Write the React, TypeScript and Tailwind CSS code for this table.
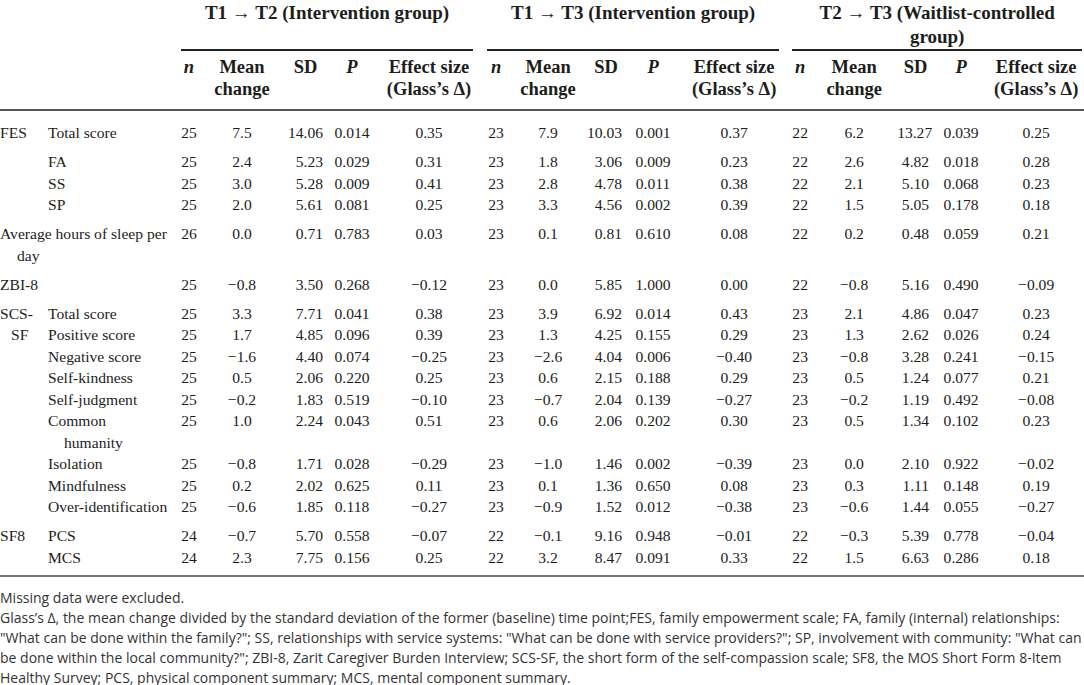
import React from "react"

type Row = {
    cat?: string
    catIndent?: boolean
    label: React.ReactNode
    span?: boolean
    v: string[]
    gap?: boolean
}

const rows: Row[] = [
    { cat: "FES", label: "Total score", v: ["25", "7.5", "14.06", "0.014", "0.35", "23", "7.9", "10.03", "0.001", "0.37", "22", "6.2", "13.27", "0.039", "0.25"] },
    { label: "FA", gap: true, v: ["25", "2.4", "5.23", "0.029", "0.31", "23", "1.8", "3.06", "0.009", "0.23", "22", "2.6", "4.82", "0.018", "0.28"] },
    { label: "SS", v: ["25", "3.0", "5.28", "0.009", "0.41", "23", "2.8", "4.78", "0.011", "0.38", "22", "2.1", "5.10", "0.068", "0.23"] },
    { label: "SP", v: ["25", "2.0", "5.61", "0.081", "0.25", "23", "3.3", "4.56", "0.002", "0.39", "22", "1.5", "5.05", "0.178", "0.18"] },
    {
        span: true,
        gap: true,
        label: (
            <>
                <span className="block">Average hours of sleep per</span>
                <span className="block pl-[17px]">day</span>
            </>
        ),
        v: ["26", "0.0", "0.71", "0.783", "0.03", "23", "0.1", "0.81", "0.610", "0.08", "22", "0.2", "0.48", "0.059", "0.21"],
    },
    { span: true, gap: true, label: "ZBI-8", v: ["25", "−0.8", "3.50", "0.268", "−0.12", "23", "0.0", "5.85", "1.000", "0.00", "22", "−0.8", "5.16", "0.490", "−0.09"] },
    { cat: "SCS-", gap: true, label: "Total score", v: ["25", "3.3", "7.71", "0.041", "0.38", "23", "3.9", "6.92", "0.014", "0.43", "23", "2.1", "4.86", "0.047", "0.23"] },
    { cat: "SF", catIndent: true, label: "Positive score", v: ["25", "1.7", "4.85", "0.096", "0.39", "23", "1.3", "4.25", "0.155", "0.29", "23", "1.3", "2.62", "0.026", "0.24"] },
    { label: "Negative score", v: ["25", "−1.6", "4.40", "0.074", "−0.25", "23", "−2.6", "4.04", "0.006", "−0.40", "23", "−0.8", "3.28", "0.241", "−0.15"] },
    { label: "Self-kindness", v: ["25", "0.5", "2.06", "0.220", "0.25", "23", "0.6", "2.15", "0.188", "0.29", "23", "0.5", "1.24", "0.077", "0.21"] },
    { label: "Self-judgment", v: ["25", "−0.2", "1.83", "0.519", "−0.10", "23", "−0.7", "2.04", "0.139", "−0.27", "23", "−0.2", "1.19", "0.492", "−0.08"] },
    {
        label: (
            <>
                <span className="block">Common</span>
                <span className="block pl-[16px]">humanity</span>
            </>
        ),
        v: ["25", "1.0", "2.24", "0.043", "0.51", "23", "0.6", "2.06", "0.202", "0.30", "23", "0.5", "1.34", "0.102", "0.23"],
    },
    { label: "Isolation", v: ["25", "−0.8", "1.71", "0.028", "−0.29", "23", "−1.0", "1.46", "0.002", "−0.39", "23", "0.0", "2.10", "0.922", "−0.02"] },
    { label: "Mindfulness", v: ["25", "0.2", "2.02", "0.625", "0.11", "23", "0.1", "1.36", "0.650", "0.08", "23", "0.3", "1.11", "0.148", "0.19"] },
    { label: "Over-identification", v: ["25", "−0.6", "1.85", "0.118", "−0.27", "23", "−0.9", "1.52", "0.012", "−0.38", "23", "−0.6", "1.44", "0.055", "−0.27"] },
    { cat: "SF8", gap: true, label: "PCS", v: ["24", "−0.7", "5.70", "0.558", "−0.07", "22", "−0.1", "9.16", "0.948", "−0.01", "22", "−0.3", "5.39", "0.778", "−0.04"] },
    { label: "MCS", v: ["24", "2.3", "7.75", "0.156", "0.25", "22", "3.2", "8.47", "0.091", "0.33", "22", "1.5", "6.63", "0.286", "0.18"] },
]

// alignment of the 15 value columns
const align = [
    "text-center", "text-center", "text-right pr-[4px]", "text-center", "text-center",
    "text-center", "text-center", "text-right pr-[5px]", "text-center", "text-center",
    "text-center", "text-center", "text-right pr-[5px]", "text-center", "text-center",
]

const widths = [46, 132, 22, 84, 43, 50, 104, 30, 74, 42, 52, 110, 22, 86, 37, 54, 96]

function SubHead() {
    const cells: React.ReactNode[] = []
    for (let g = 0; g < 3; g++) {
        cells.push(
            <th key={g + "n"} className="p-0 pt-[5px] pb-[9px] align-top text-center italic border-b-2 border-[#555]">n</th>,
            <th key={g + "m"} className="p-0 pt-[5px] pb-[9px] align-top text-center border-b-2 border-[#555] whitespace-nowrap">Mean<br />change</th>,
            <th key={g + "s"} className="p-0 pt-[5px] pb-[9px] align-top text-center border-b-2 border-[#555]">SD</th>,
            <th key={g + "p"} className="p-0 pt-[5px] pb-[9px] align-top text-center italic border-b-2 border-[#555]">P</th>,
            <th key={g + "e"} className="p-0 pt-[5px] pb-[9px] align-top text-center border-b-2 border-[#555] whitespace-nowrap">Effect size<br />(Glass’s Δ)</th>,
        )
    }
    return <tr className="leading-[22px]">{cells}</tr>
}

export default function App() {
    return (
        <div className="w-[1084px] h-[685px] overflow-hidden bg-white text-[#1d1d1b]">
            <table className="w-[1084px] table-fixed border-separate border-spacing-0 font-['Liberation_Serif',serif] text-[15.6px]">
                <colgroup>
                    {widths.map((w, i) => (
                        <col key={i} style={{ width: w }} />
                    ))}
                </colgroup>
                <thead className="font-bold text-[18.5px]">
                    <tr>
                        <th colSpan={2} rowSpan={2} className="p-0 border-b-2 border-[#555]"></th>
                        <th colSpan={5} className="p-0 align-top">
                            <div className="ml-[3px] mr-[8px] h-[51px] border-b-2 border-[#222] text-center text-[19px] leading-[24px] pt-[1px] whitespace-nowrap">
                                T1 → T2 (Intervention group)
                            </div>
                        </th>
                        <th colSpan={5} className="p-0 align-top">
                            <div className="ml-[6px] mr-[10px] h-[51px] border-b-2 border-[#222] text-center text-[19px] leading-[24px] pt-[1px] whitespace-nowrap">
                                T1 → T3 (Intervention group)
                            </div>
                        </th>
                        <th colSpan={5} className="p-0 align-top">
                            <div className="ml-[3px] mr-[2px] h-[51px] border-b-2 border-[#222] text-center text-[19px] leading-[24px] pt-[1px] whitespace-nowrap">
                                T2 → T3 (Waitlist-controlled
                                <br />
                                group)
                            </div>
                        </th>
                    </tr>
                    <SubHead />
                </thead>
                <tbody className="leading-[21.5px]">
                    {rows.map((r, i) => {
                        const first = i === 0
                        const last = i === rows.length - 1
                        const pad = first ? "pt-[11px]" : r.gap ? "pt-[7.5px]" : ""
                        const bottom = last ? "pb-[7px] border-b-2 border-[#777]" : ""
                        const base = `p-0 align-top ${pad} ${bottom}`
                        return (
                            <tr key={i}>
                                {r.span ? (
                                    <td colSpan={2} className={`${base} text-left whitespace-nowrap`}>{r.label}</td>
                                ) : (
                                    <>
                                        <td className={`${base} text-left`}>
                                            {r.cat && <span className={r.catIndent ? "pl-[11px]" : ""}>{r.cat}</span>}
                                        </td>
                                        <td className={`${base} text-left pl-[2px] whitespace-nowrap`}>{r.label}</td>
                                    </>
                                )}
                                {r.v.map((x, j) => (
                                    <td key={j} className={`${base} ${align[j]}`}>{x}</td>
                                ))}
                            </tr>
                        )
                    })}
                </tbody>
            </table>
            <div className="pt-[11px] font-['Open_Sans',sans-serif] text-[14px] leading-[20px] text-[#333] whitespace-nowrap">
                <p>Missing data were excluded.</p>
                <p>
                    Glass’s Δ, the mean change divided by the standard deviation of the former (baseline) time point;FES, family empowerment scale; FA, family (internal) relationships:
                    <br />
                    "What can be done within the family?"; SS, relationships with service systems: "What can be done with service providers?"; SP, involvement with community: "What can
                    <br />
                    be done within the local community?"; ZBI-8, Zarit Caregiver Burden Interview; SCS-SF, the short form of the self-compassion scale; SF8, the MOS Short Form 8-Item
                    <br />
                    Healthy Survey; PCS, physical component summary; MCS, mental component summary.
                </p>
            </div>
        </div>
    )
}
